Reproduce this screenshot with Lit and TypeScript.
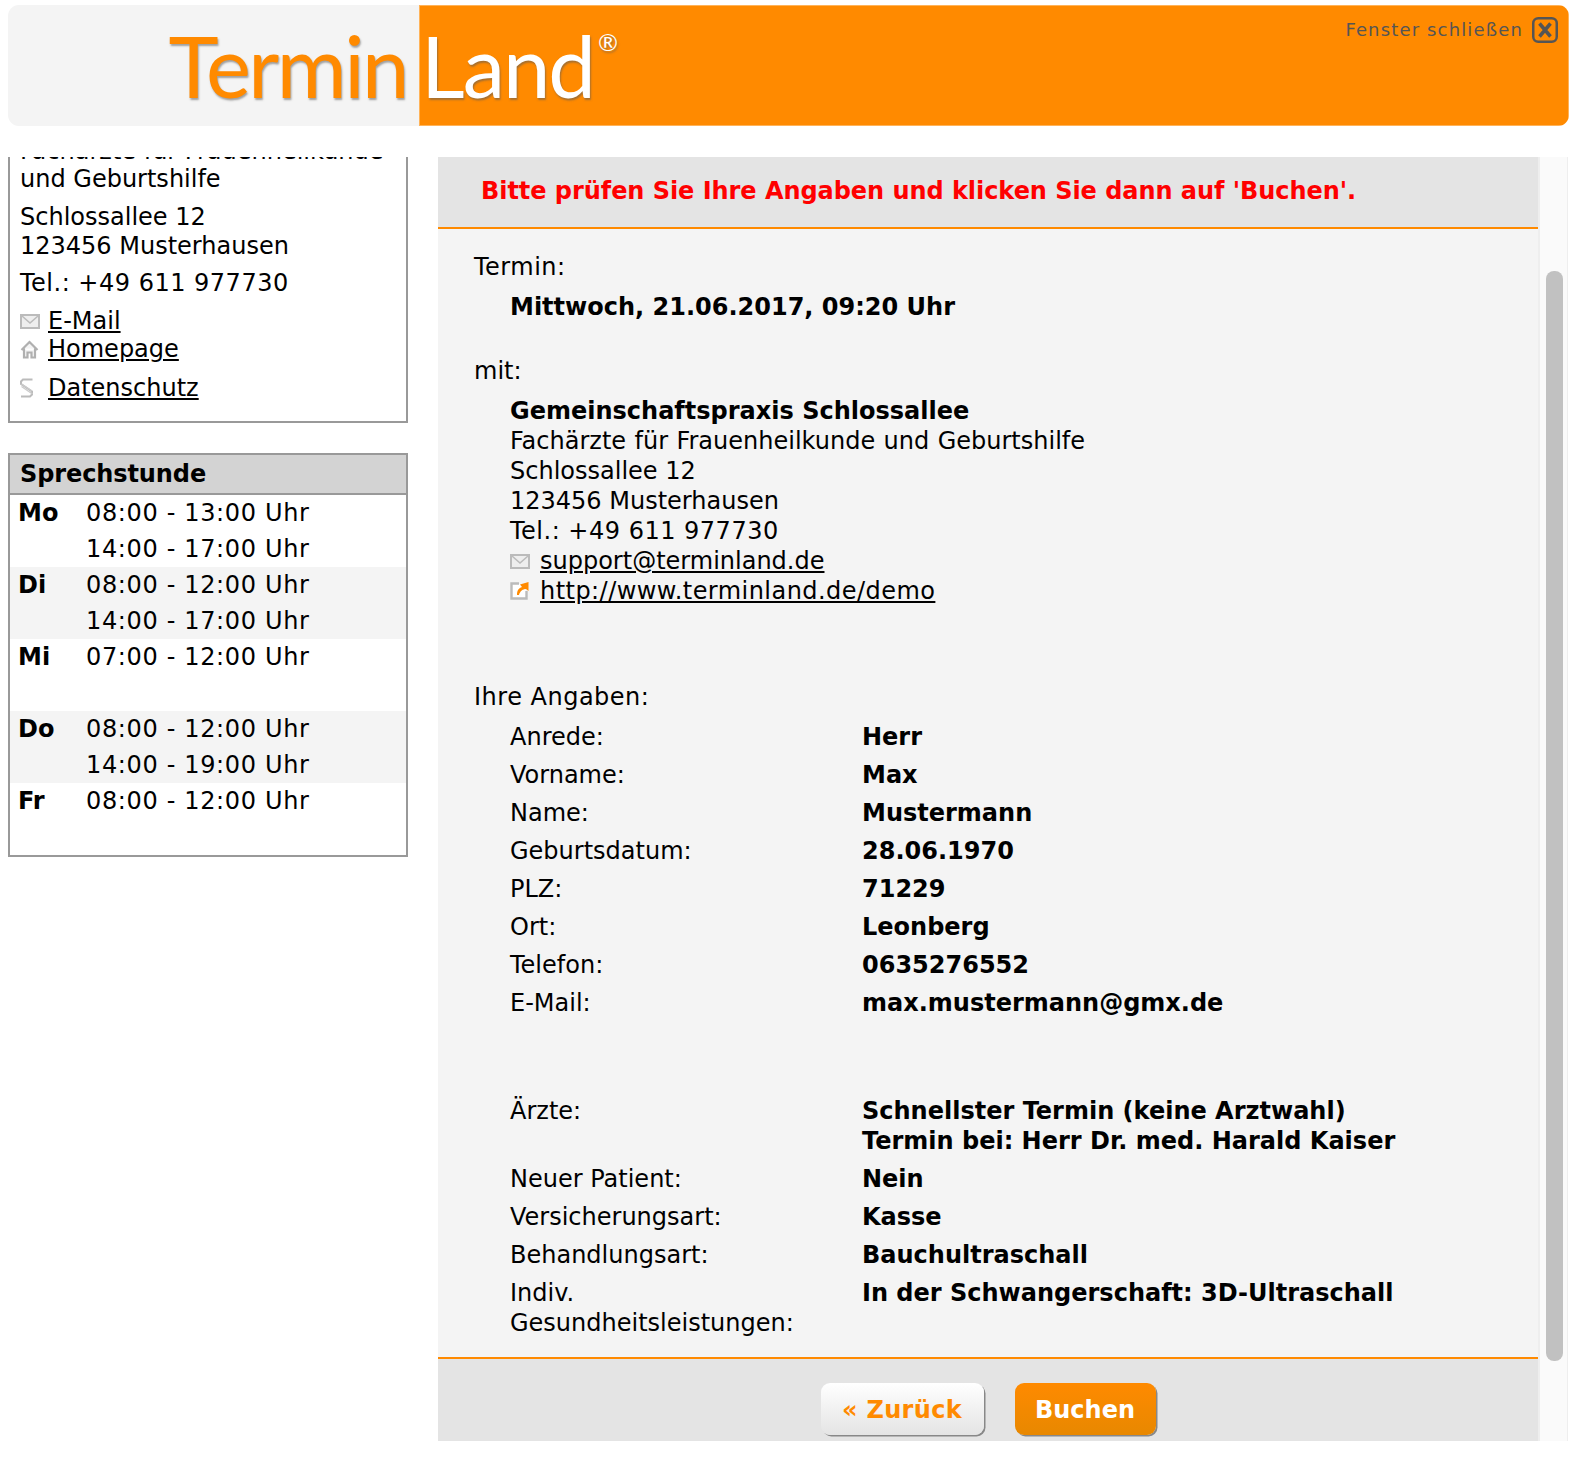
import { LitElement, html, css, svg } from "lit";
import { customElement } from "lit/decorators.js";

const mail = svg`<svg class="ic" viewBox="0 0 20 15" width="20" height="15"><rect x="1" y="1" width="18" height="13" fill="#eee" stroke="#bbb" stroke-width="2"/><path d="M2 2l8 7 8-7" fill="none" stroke="#bbb" stroke-width="1.600"/></svg>`;
const home = svg`<svg class="ic" viewBox="0 0 19 19" width="19" height="19"><path d="M1.500 10L9.500 2l8 8M4 8.500v9h3.500v-5h4v5H15v-9" fill="#f4f4f4" stroke="#b0b0b0" stroke-width="2.200"/></svg>`;
const para = svg`<svg class="ic" viewBox="0 0 14 20" width="14" height="20"><path d="M12.500 1.500H3L1 3.500v2.500l11 7.500v3l-2 2H1" fill="none" stroke="#bbb" stroke-width="2"/><path d="M1.500 8.500l11 7.500M1.500 6l10.500 7" fill="none" stroke="#ccc" stroke-width="1.500"/></svg>`;
const ext = svg`<svg class="ic" viewBox="0 0 19 18" width="19" height="18"><path d="M9 1.500H1.500v15h15V9" fill="#fff" stroke="#bbb" stroke-width="2.400"/><path d="M7 13c0-5 2-7 5-8L10 2.500 18.500 0v9L16 7c-3 0-6 2-7 6z" fill="#ff8a00"/></svg>`;

const hours = [
  ["Mo", "08:00 - 13:00 Uhr", "14:00 - 17:00 Uhr"],
  ["Di", "08:00 - 12:00 Uhr", "14:00 - 17:00 Uhr"],
  ["Mi", "07:00 - 12:00 Uhr", ""],
  ["Do", "08:00 - 12:00 Uhr", "14:00 - 19:00 Uhr"],
  ["Fr", "08:00 - 12:00 Uhr", ""],
];
const person = [
  ["Anrede:", "Herr"], ["Vorname:", "Max"], ["Name:", "Mustermann"],
  ["Geburtsdatum:", "28.06.1970"], ["PLZ:", "71229"], ["Ort:", "Leonberg"],
  ["Telefon:", "0635276552"], ["E-Mail:", "max.mustermann@gmx.de"],
];
const extra = [
  ["Ärzte:", "Schnellster Termin (keine Arztwahl)<br>Termin bei: Herr Dr. med. Harald Kaiser"],
  ["Neuer Patient:", "Nein"], ["Versicherungsart:", "Kasse"], ["Behandlungsart:", "Bauchultraschall"],
  ["Indiv.<br>Gesundheitsleistungen:", "In der Schwangerschaft: 3D-Ultraschall"],
];
const lines = (s: string) => s.split("<br>").map((t, i) => (i ? html`<br />${t}` : t));

@customElement("app-root")
export class AppRoot extends LitElement {
  static styles = css`
    :host { display: block; width: 1584px; height: 1460px; background: #fff; overflow: hidden;
      font-family: "DejaVu Sans", Verdana, sans-serif; font-size: 24px; line-height: 30.100px; color: #000; }
    * { box-sizing: border-box; }
    a { color: inherit; text-decoration: underline; }
    .page { padding: 5px 0 0 8px; }
    .header { display: flex; width: 1561px; height: 121px; border-radius: 11px; overflow: hidden; margin-bottom: 31px;
      font-family: Lato, "Noto Sans", sans-serif; }
    .h-left { width: 411px; background: #f4f4f4; display: flex; justify-content: flex-end; padding-right: 12px; }
    .h-right { flex: 1; background: #ff8a00; display: flex; justify-content: space-between; padding-left: 2px; padding-right: 11px;
      box-shadow: inset 0 0 0 1px rgba(255,255,255,.35); }
    .logo { font-size: 85px; line-height: 121px; font-weight: 400; letter-spacing: -2.500px; text-shadow: 1px 2px 2px rgba(90,90,90,.55); }
    .logo.t { color: #ff8a00; }
    .logo.l { color: #fff; position: relative; letter-spacing: -2px; }
    .reg { font-size: 24px; line-height: 24px; position: absolute; top: 25px; right: -24px; letter-spacing: 0; font-weight: 400; }
    .close { display: flex; align-items: flex-start; gap: 9px; padding-top: 12px; color: #555; font-family: "DejaVu Sans", sans-serif; font-size: 18px; line-height: 26px; letter-spacing: 1.150px; }
    .close svg { display: block; }
    .main { display: flex; height: 1284px; }
    .side { width: 400px; margin-right: 30px; }
    .box { border: 2px solid #999; background: #fff; }
    .addr { height: 266px; border-top: 0; overflow: hidden; padding: 0 10px; }
    .addr-in { margin-top: -20.400px; line-height: 28.300px; }
    .addr p { margin: 0 0 10px; }
    .addr p.tight { margin-bottom: 9px; }
    .lnk { display: flex; align-items: center; height: 28.300px; }
    .lnk.ds { margin-top: 10px; }
    .ico { width: 28px; flex: none; display: flex; align-items: center; }
    .sp { letter-spacing: .5px; }
    .url { letter-spacing: .45px; }
    .hours { margin-top: 30px; height: 404px; }
    .hours h3 { margin: 0; font-size: 24px; line-height: 39px; height: 40px; padding-left: 10px; background: #d3d3d3; border-bottom: 2px solid #999; letter-spacing: -.1px; }
    .day { display: grid; grid-template-columns: 68px 1fr; padding-left: 8px; line-height: 36px; }
    .day.alt { background: #f4f4f4; }
    .day b { grid-row: span 2; }
    .day span { height: 36px; letter-spacing: .65px; }
    .content { width: 1100px; background: #f4f4f4; display: flex; flex-direction: column; }
    .title { height: 72px; background: #e4e4e4; border-bottom: 2px solid #ff8a00; color: #f00; font-weight: 700; padding: 19px 0 0 43px; letter-spacing: -.05px; }
    .body { flex: 1; padding: 23px 0 0 36px; }
    .in { padding-left: 36px; }
    .s1 { margin-top: 10px; }
    .s2 { margin-top: 34px; }
    .s3 { margin-top: 9.500px; }
    .wide-w { word-spacing: .8px; }
    .lab { letter-spacing: .5px; }
    .contact { display: flex; align-items: center; height: 30.100px; }
    .contact .ico { width: 30px; }
    .s4 { margin-top: 76px; }
    .rows { margin-top: 9.600px; padding-left: 36px; }
    .rows.more { margin-top: 70px; }
    .row { display: grid; grid-template-columns: 352px 1fr; padding-bottom: 7.900px; }
    .foot { height: 84px; background: #e4e4e4; border-top: 2px solid #ff8a00; display: flex; justify-content: center; gap: 31px; padding-top: 23.700px; }
    .btn { height: 52px; border-radius: 9px; font-weight: 700; font-size: 24px; display: flex; align-items: center; justify-content: center;
      box-shadow: 1.500px 1.500px 0 #888; font-family: "DejaVu Sans", sans-serif; border: 0; padding: 3px 0 0; }
    .back { width: 163px; color: #ff8a00; background: linear-gradient(#fff, #e4e4e4); letter-spacing: .3px; }
    .go { width: 141px; color: #fff; background: linear-gradient(#ff8a00, #e88800); }
    .bar { width: 29.500px; background: #fafafa; border-left: 2px solid #eee; border-right: 1.500px solid #eee; padding: 114px 4px 0 6px; }
    .thumb { height: 1090px; background: #c1c1c1; border-radius: 8px; }
  `;

  render() {
    return html`<div class="page">
      <div class="header">
        <div class="h-left"><span class="logo t">Termin</span></div>
        <div class="h-right">
          <span class="logo l">Land<span class="reg">®</span></span>
          <div class="close">Fenster schließen
            <svg width="26" height="26" viewBox="0 0 26 26"><rect x="1.250" y="1.250" width="23.500" height="23.500" rx="5" fill="none" stroke="#555" stroke-width="2.500"/><path d="M7.500 6.500l11 13M18.500 6.500l-11 13" stroke="#555" stroke-width="3.500"/></svg>
          </div>
        </div>
      </div>
      <div class="main">
        <div class="side">
          <div class="box addr"><div class="addr-in">
            <p>Fachärzte für Frauenheilkunde<br />und Geburtshilfe</p>
            <p class="tight">Schlossallee 12<br />123456 Musterhausen</p>
            <p class="sp">Tel.: +49 611 977730</p>
            <div class="lnk"><span class="ico">${mail}</span><a href="#">E-Mail</a></div>
            <div class="lnk"><span class="ico">${home}</span><a href="#">Homepage</a></div>
            <div class="lnk ds"><span class="ico">${para}</span><a href="#">Datenschutz</a></div>
          </div></div>
          <div class="box hours">
            <h3>Sprechstunde</h3>
            ${hours.map((d, i) => html`<div class="day ${i % 2 ? "alt" : ""}"><b>${d[0]}</b><span>${d[1]}</span><span>${d[2]}</span></div>`)}
          </div>
        </div>
        <div class="content">
          <div class="title">Bitte prüfen Sie Ihre Angaben und klicken Sie dann auf 'Buchen'.</div>
          <div class="body">
            <div class="lab">Termin:</div>
            <div class="in s1"><b>Mittwoch, 21.06.2017, 09:20 Uhr</b></div>
            <div class="s2">mit:</div>
            <div class="in s3">
              <b>Gemeinschaftspraxis Schlossallee</b><br />
              <span class="wide-w">Fachärzte für Frauenheilkunde und Geburtshilfe</span><br />
              Schlossallee 12<br />
              123456 Musterhausen<br />
              <span class="sp">Tel.: +49 611 977730</span>
              <div class="contact"><span class="ico">${mail}</span><a href="#">support@terminland.de</a></div>
              <div class="contact"><span class="ico">${ext}</span><a class="url" href="#">http://www.terminland.de/demo</a></div>
            </div>
            <div class="s4 lab">Ihre Angaben:</div>
            <div class="rows">
              ${person.map((r) => html`<div class="row"><span>${r[0]}</span><b>${r[1]}</b></div>`)}
            </div>
            <div class="rows more">
              ${extra.map((r) => html`<div class="row"><span>${lines(r[0])}</span><b>${lines(r[1])}</b></div>`)}
            </div>
          </div>
          <div class="foot">
            <button class="btn back">« Zurück</button>
            <button class="btn go">Buchen</button>
          </div>
        </div>
        <div class="bar"><div class="thumb"></div></div>
      </div>
    </div>`;
  }
}
